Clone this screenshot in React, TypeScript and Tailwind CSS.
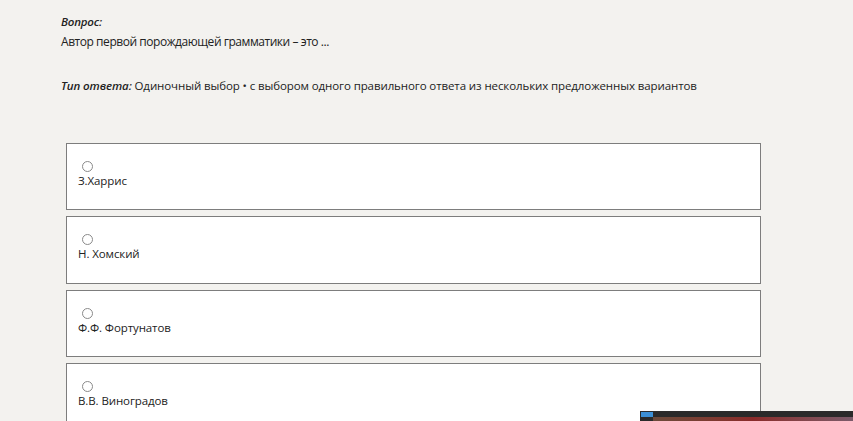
import React from "react";

const options = ["З.Харрис", "Н. Хомский", "Ф.Ф. Фортунатов", "В.В. Виноградов"];

export default function App() {
  return (
    <div
      className="relative w-[853px] h-[421px] overflow-hidden bg-[#f3f2ef] text-[#222]"
      style={{ fontFamily: '"Open Sans", "Noto Sans", sans-serif' }}
    >
      <div className="pl-[61px] pt-[14px]">
        <div className="text-[11.5px] leading-[16px] font-semibold italic tracking-[-0.2px]">Вопрос:</div>
        <div className="text-[12px] leading-[18px] mt-[3px] tracking-[-0.45px]">
          Автор первой порождающей грамматики – это ...
        </div>
        <div className="text-[11.5px] leading-[16px] mt-[27px] tracking-[-0.1px]">
          <span className="font-semibold italic">Тип ответа:</span> Одиночный выбор • с выбором одного правильного ответа из нескольких предложенных вариантов
        </div>
      </div>
      <div className="ml-[66px] mt-[49px] w-[695px] flex flex-col gap-[6px]">
        {options.map((o) => (
          <div key={o} className="h-[67.33px] bg-white border border-[#7d7d7d] pl-[11px] pt-[17px]">
            <div className="ml-[4px] w-[11px] h-[11px] rounded-full border border-[#8a8a8a] bg-white" />
            <div className="text-[11.5px] leading-[16px] mt-[1px] tracking-[-0.1px]">{o}</div>
          </div>
        ))}
      </div>
      <div className="absolute left-[640px] top-[411px] w-[213px] h-[10px] bg-[#2a2a2a] flex items-start">
        <div className="w-[12px] h-[5px] bg-[#3b8fd6] mt-[1px] ml-[1px]" />
        <div className="flex-1 h-[4px] mt-[6px] bg-gradient-to-r from-[#6b4a3a] via-[#8a2a2a] to-[#7a5a6a]" />
      </div>
    </div>
  );
}
